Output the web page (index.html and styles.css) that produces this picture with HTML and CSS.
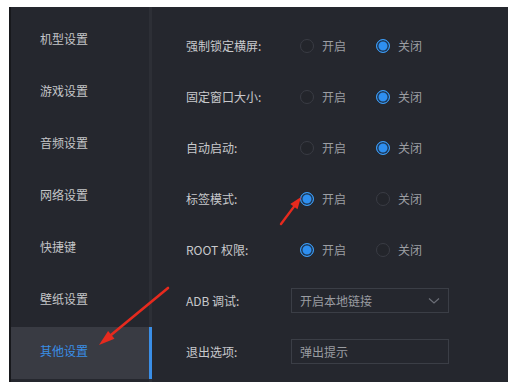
FILE: index.html
```html
<!DOCTYPE html>
<html>
<head>
  <title>其他设置</title>
  <link rel="stylesheet" href="styles.css">
</head>
<body>
  <div class="window">
    <ul class="sidebar">
      <li>机型设置</li>
      <li>游戏设置</li>
      <li>音频设置</li>
      <li>网络设置</li>
      <li>快捷键</li>
      <li>壁纸设置</li>
      <li class="active">其他设置</li>
    </ul>

    <div class="content">
      <div class="row">
        <span class="label">强制锁定横屏:</span>
        <div class="radios">
          <span class="radio"><i></i>开启</span>
          <span class="radio checked"><i></i>关闭</span>
        </div>
      </div>
      <div class="row">
        <span class="label">固定窗口大小:</span>
        <div class="radios">
          <span class="radio"><i></i>开启</span>
          <span class="radio checked"><i></i>关闭</span>
        </div>
      </div>
      <div class="row">
        <span class="label">自动启动:</span>
        <div class="radios">
          <span class="radio"><i></i>开启</span>
          <span class="radio checked"><i></i>关闭</span>
        </div>
      </div>
      <div class="row">
        <span class="label">标签模式:</span>
        <div class="radios">
          <span class="radio checked"><i></i>开启</span>
          <span class="radio"><i></i>关闭</span>
        </div>
      </div>
      <div class="row">
        <span class="label">ROOT 权限:</span>
        <div class="radios">
          <span class="radio checked"><i></i>开启</span>
          <span class="radio"><i></i>关闭</span>
        </div>
      </div>
      <div class="row">
        <span class="label">ADB 调试:</span>
        <div class="select">
          <span>开启本地链接</span>
          <svg width="12" height="8" viewBox="0 0 12 8"><path d="M1 1.5 L6 6 L11 1.5" fill="none" stroke="#6c6f78" stroke-width="1.2"/></svg>
        </div>
      </div>
      <div class="row">
        <span class="label">退出选项:</span>
        <div class="input">弹出提示</div>
      </div>
    </div>

    <!-- 红色标注箭头 -->
    <svg class="marks" width="499" height="375" viewBox="0 0 499 375">
      <line x1="157" y1="281" x2="100" y2="328" stroke="#e62a1e" stroke-width="2.6" stroke-linecap="round"/>
      <polygon points="88,338 103.5,331.7 97.1,323.9" fill="#e62a1e"/>
      <line x1="270" y1="217" x2="283" y2="199.6" stroke="#e62a1e" stroke-width="2.4" stroke-linecap="round"/>
      <polygon points="290,190 286.5,202.3 279.3,196.9" fill="#e62a1e"/>
    </svg>
  </div>
</body>
</html>
```

FILE: styles.css
```css
/* 设置窗口 */
body {
  margin: 7px 8px 7px 9px;
  background-color: #fff;
  font-family: "Noto Sans CJK SC", "Liberation Sans", sans-serif;
  font-size: 12px;
}

.window {
  position: relative;
  display: flex;
  width: 497px;
  height: 375px;
  background-color: #25272e;
  border-left: 2px solid #17181c;
}

.sidebar {
  list-style: none;
  margin: 0;
  padding: 8px 0 0 0;
  width: 138px;
  border-right: 3px solid #2d2f36;
}

.sidebar li {
  height: 52px;
  line-height: 48px;
  padding-left: 29px;
  color: #c4c5c8;
}

.sidebar li.active {
  background-color: #393b43;
  color: #3a8ee6;
  margin-right: -3px;
  border-right: 3px solid #3a8ee6;
}

.content {
  flex: 1;
  padding: 13px 0 0 34px;
}

.row {
  display: flex;
  align-items: center;
  height: 51px;
}

.label {
  width: 105px;
  color: #c8c9cc;
}

.radios {
  display: flex;
  padding-left: 9px;
}

.radio {
  display: flex;
  align-items: center;
  color: #9c9ea3;
  margin-right: 30px;
}

.radio i {
  box-sizing: border-box;
  width: 14px;
  height: 14px;
  margin-right: 8px;
  border-radius: 50%;
  border: 1px solid #3a3c44;
  background-color: #23252b;
}

.radio.checked i {
  border: 1px solid #3d9cf5;
  background-color: #2e8ff0;
  box-shadow: inset 0 0 0 1.5px #1e3550;
}

.select, .input {
  box-sizing: border-box;
  width: 158px;
  height: 25px;
  border: 1px solid #3b3e46;
  padding: 0 8px;
  color: #9a9ca1;
  display: flex;
  align-items: center;
  justify-content: space-between;
}

.marks {
  position: absolute;
  left: 0;
  top: 0;
  pointer-events: none;
}
```
